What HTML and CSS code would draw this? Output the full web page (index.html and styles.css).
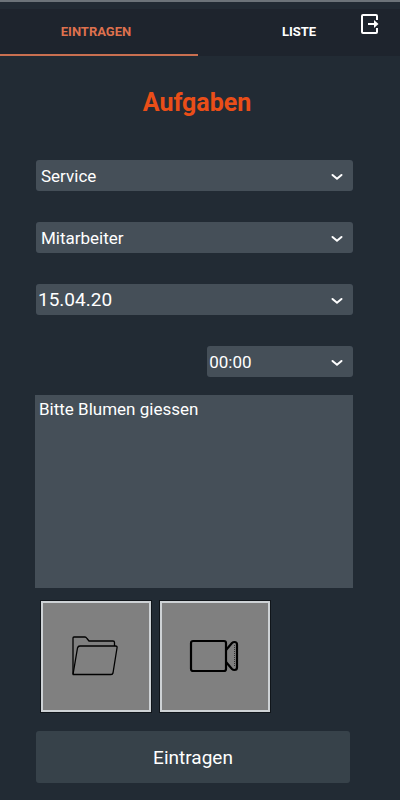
FILE: index.html
```html
<!DOCTYPE html>
<html lang="de">
<head>
<meta charset="utf-8">
<meta name="viewport" content="width=device-width, initial-scale=1">
<title>Aufgaben</title>
<link rel="stylesheet" href="styles.css">
</head>
<body>
<header class="topbar">
  <nav class="tabs">
    <a class="tab tab-active" href="#eintragen" aria-current="page">EINTRAGEN</a>
    <a class="tab" href="#liste">LISTE</a>
  </nav>
  <button class="logout" type="button" aria-label="Abmelden">
    <svg width="20" height="22" viewBox="0 0 20 22" fill="none" stroke="#fff" stroke-width="2">
      <path d="M17 7V3Q17 2 16 2H3Q2 2 2 3V19Q2 20 3 20H16Q17 20 17 19V15"/>
      <path d="M8 11H15"/>
      <path d="M14 7L18.500 11L14 15Z" fill="#fff" stroke="none"/>
    </svg>
  </button>
</header>
<main class="page">
  <h1 class="title">Aufgaben</h1>
  <form class="form">
    <div class="field">
      <select class="select" aria-label="Bereich"><option>Service</option></select>
      <svg class="chevron" viewBox="0 0 12 8"><path d="M1.500 2L6 5.800L10.500 2"/></svg>
    </div>
    <div class="field">
      <select class="select" aria-label="Mitarbeiter"><option>Mitarbeiter</option></select>
      <svg class="chevron" viewBox="0 0 12 8"><path d="M1.500 2L6 5.800L10.500 2"/></svg>
    </div>
    <div class="field">
      <select class="select select-date" aria-label="Datum"><option>15.04.20</option></select>
      <svg class="chevron" viewBox="0 0 12 8"><path d="M1.500 2L6 5.800L10.500 2"/></svg>
    </div>
    <div class="field field-time">
      <select class="select select-time" aria-label="Uhrzeit"><option>00:00</option></select>
      <svg class="chevron" viewBox="0 0 12 8"><path d="M1.500 2L6 5.800L10.500 2"/></svg>
    </div>
    <textarea class="note" aria-label="Aufgabe">Bitte Blumen giessen</textarea>
    <div class="media">
      <button class="tile" type="button" aria-label="Datei auswählen">
        <svg width="48" height="42" viewBox="0 0 48 42" fill="none" stroke="#000" stroke-width="1.300" stroke-linejoin="round">
          <path d="M2 39V3Q2 2 3 2H14Q15 2 16 3.500L18 6H42Q43.500 6 43.500 7.500V11"/>
          <path d="M2 39.500L6.500 13Q7 11 9 11H44.500Q46.500 11 46 13L42 38Q41.700 39.500 40 39.500Z"/>
        </svg>
      </button>
      <button class="tile" type="button" aria-label="Video aufnehmen">
        <svg width="50" height="34" viewBox="0 0 50 34" fill="none" stroke="#000" stroke-width="2.200" stroke-linejoin="round">
          <rect x="2" y="2" width="35" height="30" rx="2"/>
          <path d="M37 11L43 4Q44 3 45.500 3Q48 3 48 5.500V28.500Q48 31 45.500 31Q44 31 43 30L37 23"/>
          <path d="M45.500 6V28" stroke="#333" stroke-width="1" stroke-dasharray="1 1"/>
        </svg>
      </button>
    </div>
    <button class="submit" type="button">Eintragen</button>
  </form>
</main>
</body>
</html>
```
FILE: styles.css
```css
* {
  box-sizing: border-box;
}

body {
  margin: 0;
  min-height: 100vh;
  background: #222b34;
  color: #fff;
  font-family: Roboto, "Liberation Sans", sans-serif;
}

button,
select,
textarea {
  margin: 0;
  border: 0;
  color: inherit;
  font-family: inherit;
}

.topbar {
  position: relative;
  padding-top: 7px;
  border-top: 2px solid #6c7379;
}

.tabs {
  display: grid;
  grid-template-columns: 1fr 1fr;
  padding-right: 4px;
  background: #1e242d;
}

.tab {
  padding: 14px 6px 13px 0;
  border-bottom: 2px solid transparent;
  color: #fff;
  font-size: 13px;
  font-weight: 700;
  line-height: 18px;
  text-align: center;
  text-decoration: none;
}

.tab + .tab {
  padding-right: 0;
  padding-left: 4px;
}

.tab-active {
  border-color: #c96f50;
  color: #de714e;
}

.logout {
  position: absolute;
  top: 11px;
  right: 20px;
  padding: 0;
  background: none;
  line-height: 0;
}

.page {
  padding: 32px 47px 16px 36px;
}

.title {
  margin: 0 -5px 43px 0;
  color: #ea4e18;
  font-size: 25px;
  font-weight: 700;
  line-height: 29px;
  text-align: center;
}

.form {
  display: flex;
  flex-direction: column;
}

.field {
  display: grid;
  align-items: center;
  margin-bottom: 31px;
}

.field-time {
  width: 46%;
  align-self: flex-end;
  margin-bottom: 18px;
}

.select,
.chevron {
  grid-area: 1 / 1;
}

.select {
  appearance: none;
  width: 100%;
  height: 31px;
  padding: 0 32px 0 5px;
  border-radius: 3px;
  background: #454f58;
  font-size: 17px;
}

.select-date {
  padding-left: 2px;
  font-size: 19px;
}

.select-time {
  padding-left: 2px;
}

.chevron {
  justify-self: end;
  width: 12px;
  height: 8px;
  margin: 2px 10px 0 0;
  fill: none;
  stroke: #fff;
  stroke-width: 2;
  stroke-linecap: round;
  pointer-events: none;
}

.note {
  height: 193px;
  margin-left: -1px;
  padding: 4px;
  background: #454f58;
  font-size: 17px;
  line-height: 20px;
  resize: none;
}

.media {
  display: flex;
  gap: 9px;
  margin: 13px 5px 19px;
}

.tile {
  display: flex;
  align-items: center;
  justify-content: center;
  width: 110px;
  height: 111px;
  padding: 0 3px 2px 0;
  border: 2px solid #ced2d5;
  outline: 1px solid #10151a;
  background: #808080;
}

.submit {
  height: 52px;
  margin-right: 3px;
  border-radius: 3px;
  background: #37424a;
  font-size: 19px;
}
```
